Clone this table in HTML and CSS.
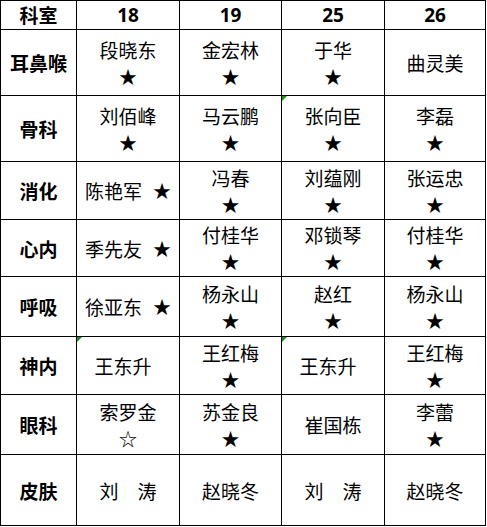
FILE: index.html
```html
<!DOCTYPE html>
<html lang="zh">
<head>
<meta charset="utf-8">
<title>科室排班</title>
<link rel="stylesheet" href="styles.css">
</head>
<body>
<div class="table">
  <div class="cell head">科室</div>
  <div class="cell head num">18</div>
  <div class="cell head num">19</div>
  <div class="cell head num">25</div>
  <div class="cell head num">26</div>

  <div class="cell label">耳鼻喉</div>
  <div class="cell"><span>段晓东</span><span class="star">★</span></div>
  <div class="cell"><span>金宏林</span><span class="star">★</span></div>
  <div class="cell"><span>于华</span><span class="star">★</span></div>
  <div class="cell"><span>曲灵美</span></div>

  <div class="cell label">骨科</div>
  <div class="cell"><span>刘佰峰</span><span class="star">★</span></div>
  <div class="cell"><span>马云鹏</span><span class="star">★</span></div>
  <div class="cell flag"><span>张向臣</span><span class="star">★</span></div>
  <div class="cell"><span>李磊</span><span class="star">★</span></div>

  <div class="cell label">消化</div>
  <div class="cell inline"><span>陈艳军</span><span class="star side">★</span></div>
  <div class="cell"><span>冯春</span><span class="star">★</span></div>
  <div class="cell"><span>刘蕴刚</span><span class="star">★</span></div>
  <div class="cell"><span>张运忠</span><span class="star">★</span></div>

  <div class="cell label">心内</div>
  <div class="cell inline"><span>季先友</span><span class="star side">★</span></div>
  <div class="cell"><span>付桂华</span><span class="star">★</span></div>
  <div class="cell"><span>邓锁琴</span><span class="star">★</span></div>
  <div class="cell"><span>付桂华</span><span class="star">★</span></div>

  <div class="cell label">呼吸</div>
  <div class="cell inline"><span>徐亚东</span><span class="star side">★</span></div>
  <div class="cell"><span>杨永山</span><span class="star">★</span></div>
  <div class="cell"><span>赵红</span><span class="star">★</span></div>
  <div class="cell"><span>杨永山</span><span class="star">★</span></div>

  <div class="cell label">神内</div>
  <div class="cell flag shift"><span>王东升</span></div>
  <div class="cell"><span>王红梅</span><span class="star">★</span></div>
  <div class="cell flag shift"><span>王东升</span></div>
  <div class="cell"><span>王红梅</span><span class="star">★</span></div>

  <div class="cell label">眼科</div>
  <div class="cell"><span>索罗金</span><span class="star">☆</span></div>
  <div class="cell"><span>苏金良</span><span class="star">★</span></div>
  <div class="cell"><span>崔国栋</span></div>
  <div class="cell"><span>李蕾</span><span class="star">★</span></div>

  <div class="cell label">皮肤</div>
  <div class="cell"><span>刘　涛</span></div>
  <div class="cell"><span>赵晓冬</span></div>
  <div class="cell"><span>刘　涛</span></div>
  <div class="cell"><span>赵晓冬</span></div>
</div>
</body>
</html>
```

FILE: styles.css
```css
html, body {
  margin: 0;
  padding: 0;
  background: #ffffff;
}

.table {
  display: grid;
  width: 486px;
  box-sizing: border-box;
  grid-template-columns: 75px 102px 101px 102px 100px;
  grid-template-rows: 28px 65px 65px 57px 56px 59px 57px 59px 70px;
  gap: 1px;
  padding: 1px;
  background: #000000;
  font-family: "Noto Sans CJK SC", "Noto Sans", sans-serif;
  font-size: 19px;
  color: #000000;
}

.cell {
  position: relative;
  background: #ffffff;
  display: flex;
  flex-direction: column;
  align-items: center;
  justify-content: center;
  line-height: 27px;
  white-space: nowrap;
}

.head {
  font-weight: 700;
  line-height: 28px;
}

.head.num {
  font-family: "Noto Sans", "Noto Sans CJK SC", sans-serif;
  font-size: 19px;
}

.label {
  font-weight: 700;
}

.star {
  font-size: 18px;
}

.inline {
  flex-direction: row;
}

.star.side {
  margin-left: 11px;
}

.shift {
  padding-right: 10px;
  box-sizing: border-box;
}

.flag::before {
  content: "";
  position: absolute;
  left: 0;
  top: 0;
  width: 0;
  height: 0;
  border-top: 5px solid #1c8c1c;
  border-right: 5px solid transparent;
}
```
